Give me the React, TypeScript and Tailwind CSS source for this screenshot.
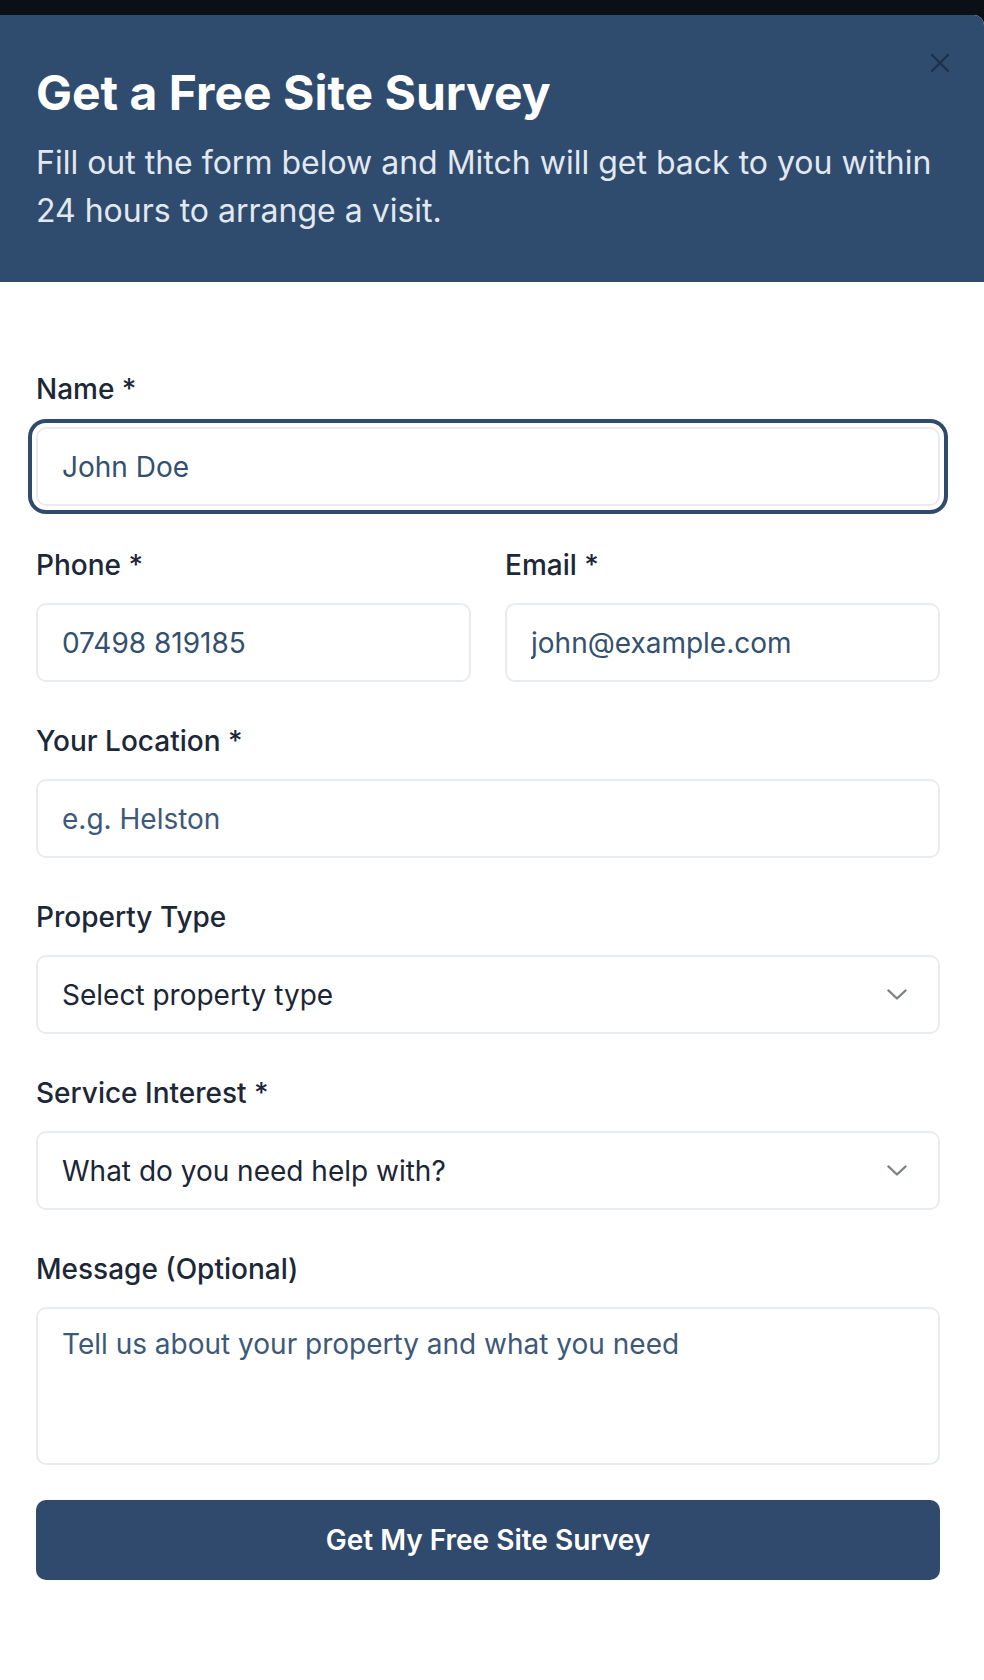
import type { ReactNode } from 'react';

function Label({ children }: { children: ReactNode }) {
  return <label className="mb-[18px] block text-[28px] font-medium leading-[40px] text-[#1c2737]">{children}</label>;
}

const fieldBase =
  'block h-[79px] w-full rounded-[10px] border-2 border-[#e8ecf1] bg-white px-6 text-[28px] text-[#34506f] placeholder:text-[#3e5879] focus:outline-none';

function Chevron() {
  return (
    <svg aria-hidden="true" viewBox="0 0 20 11" className="h-[11px] w-[20px]" fill="none" stroke="#7c8087" strokeWidth="2.4" strokeLinecap="round" strokeLinejoin="round">
      <path d="M1.5 1.5 10 9.5l8.5-8" />
    </svg>
  );
}

function SelectBox({ text }: { text: string }) {
  return (
    <button
      type="button"
      className="flex h-[79px] w-full items-center justify-between rounded-[10px] border-2 border-[#e8ecf1] bg-white pl-6 pr-[31px] text-left text-[28px] text-[#1b2535]"
    >
      <span>{text}</span>
      <Chevron />
    </button>
  );
}

export default function App() {
  return (
    <div className="min-h-[1680px] bg-[#0b0f16] pt-[15px] font-['Inter',sans-serif]">
      <div className="relative min-h-[1665px] rounded-tr-[10px] bg-white">
        <header className="rounded-tr-[10px] bg-[#2f4b6e] pb-[47px] pl-[36px] pr-[44px] pt-[50px]">
          <h2 className="text-[48px] font-bold leading-[56px] text-white">Get a Free Site Survey</h2>
          <p className="mt-[18px] text-[32px] leading-[48px] text-[#e2e8f0]">
            Fill out the form below and Mitch will get back to you within 24 hours to arrange a visit.
          </p>
        </header>

        <button type="button" aria-label="Close" className="absolute right-[34px] top-[38px] opacity-70">
          <svg aria-hidden="true" viewBox="0 0 20 20" className="h-[20px] w-[20px]" fill="none" stroke="#16263c" strokeWidth="2.2" strokeLinecap="round">
            <path d="M2 2l16 16M18 2 2 18" />
          </svg>
        </button>

        <form className="flex flex-col gap-[39px] pb-[100px] pl-[36px] pr-[44px] pt-[87px]" onSubmit={(e) => e.preventDefault()}>
          <div>
            <Label>Name *</Label>
            <input className={`${fieldBase} ring-4 ring-[#2f4a6d] ring-offset-4 ring-offset-white`} defaultValue="John Doe" />
          </div>

          <div className="grid grid-cols-2 gap-[34px]">
            <div>
              <Label>Phone *</Label>
              <input className={fieldBase} defaultValue="07498 819185" />
            </div>
            <div>
              <Label>Email *</Label>
              <input className={fieldBase} defaultValue="john@example.com" />
            </div>
          </div>

          <div>
            <Label>Your Location *</Label>
            <input className={fieldBase} placeholder="e.g. Helston" />
          </div>

          <div>
            <Label>Property Type</Label>
            <SelectBox text="Select property type" />
          </div>

          <div>
            <Label>Service Interest *</Label>
            <SelectBox text="What do you need help with?" />
          </div>

          <div>
            <Label>Message (Optional)</Label>
            <textarea
              className="block h-[158px] w-full resize-none rounded-[10px] border-2 border-[#e8ecf1] bg-white px-6 pt-[15px] text-[28px] leading-[40px] text-[#34506f] placeholder:text-[#3e5879] focus:outline-none"
              placeholder="Tell us about your property and what you need"
            />
          </div>

          <button
            type="submit"
            className="-mt-[4px] h-[80px] w-full rounded-[10px] bg-[#2f4a6d] text-[28px] font-semibold text-white"
          >
            Get My Free Site Survey
          </button>
        </form>
      </div>
    </div>
  );
}
